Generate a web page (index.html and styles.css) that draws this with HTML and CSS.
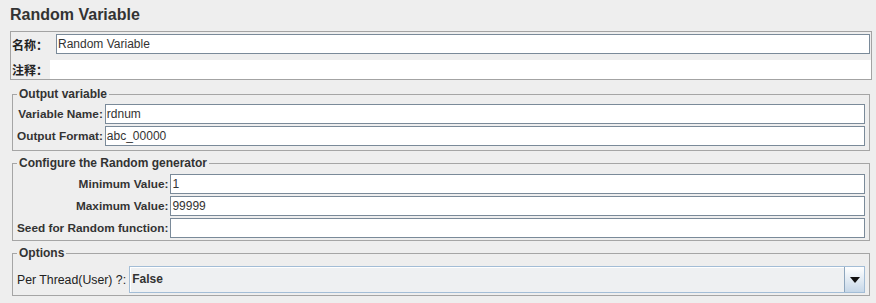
FILE: index.html
```html
<!DOCTYPE html>
<html lang="en">
<head>
    <meta charset="UTF-8">
    <meta name="viewport" content="width=device-width, initial-scale=1.0">
    <title>Random Variable</title>
    <link rel="stylesheet" href="styles.css">
</head>
<body>
    <div class="panel">
        <h1 class="title">Random Variable</h1>

        <div class="name-box">
            <div class="name-row">
                <span class="cn-label">名称：</span>
                <div class="field name-field">Random Variable</div>
            </div>
            <div class="comment-row">
                <span class="cn-label">注释：</span>
                <div class="comment-area"></div>
            </div>
        </div>

        <fieldset class="group group-output">
            <legend>Output variable</legend>
            <div class="form-grid">
                <label>Variable Name:</label>
                <div class="field">rdnum</div>
                <label>Output Format:</label>
                <div class="field">abc_00000</div>
            </div>
        </fieldset>

        <fieldset class="group group-random">
            <legend>Configure the Random generator</legend>
            <div class="form-grid">
                <label>Minimum Value:</label>
                <div class="field">1</div>
                <label>Maximum Value:</label>
                <div class="field">99999</div>
                <label>Seed for Random function:</label>
                <div class="field"></div>
            </div>
        </fieldset>

        <fieldset class="group group-options">
            <legend>Options</legend>
            <div class="option-row">
                <span class="plain-label">Per Thread(User) ?:</span>
                <div class="combo">
                    <span class="combo-value">False</span>
                    <div class="combo-arrow">
                        <svg width="10" height="6" viewBox="0 0 10 6"><path d="M0 0h10L5 6z" fill="#111"/></svg>
                    </div>
                </div>
            </div>
        </fieldset>
    </div>
</body>
</html>
```

FILE: styles.css
```css
body {
    margin: 0;
    padding: 0;
    background-color: #eeeeee;
    font-family: "Liberation Sans", Arial, sans-serif;
    font-size: 12px;
    color: #333333;
}
.panel {
    padding: 5px 4px 0 10px;
}
.title {
    margin: 0;
    font-size: 16px;
    line-height: 20px;
    font-weight: bold;
    color: #333333;
}
.name-box {
    margin-top: 6px;
    border: 1px solid #a3a3a3;
    padding: 2px 0 0 1px;
}
.name-row {
    display: flex;
    align-items: center;
    padding-right: 1px;
}
.comment-row {
    display: flex;
    align-items: center;
    margin-top: 6px;
}
.cn-label {
    font-family: "Liberation Sans", "Noto Sans CJK SC", sans-serif;
    font-weight: bold;
    font-size: 12px;
    color: #222222;
    flex: none;
}
.name-row .cn-label {
    width: 44px;
}
.comment-row .cn-label {
    width: 38px;
}
.comment-area {
    flex: 1;
    height: 19px;
    background-color: #fff;
}
.field {
    box-sizing: border-box;
    height: 20px;
    border: 1px solid #7a8a99;
    background-color: #fff;
    padding: 0 1px;
    line-height: 18px;
    font-size: 12px;
    color: #333333;
    white-space: nowrap;
}
.name-field {
    flex: 1;
}
.group {
    margin: 5px 2px 0;
    padding: 4px 4px 2px;
    border: 1px solid #a5a5a5;
    min-width: 0;
}
.group legend {
    padding: 0 2px;
    font-weight: bold;
    font-size: 12px;
    line-height: 14px;
    color: #333333;
}
.group-output {
    margin-top: 7px;
    padding-top: 3px;
    padding-bottom: 4px;
}
.group-options {
    padding-top: 6px;
    padding-bottom: 2px;
}
.form-grid {
    display: grid;
    grid-template-columns: auto 1fr;
    column-gap: 2px;
    row-gap: 2px;
}
.form-grid label {
    align-self: center;
    text-align: right;
    font-weight: bold;
    font-size: 11.8px;
    white-space: nowrap;
}
.option-row {
    display: flex;
    align-items: center;
    gap: 3px;
}
.plain-label {
    font-size: 12.3px;
    color: #222222;
    white-space: nowrap;
}
.combo {
    flex: 1;
    display: flex;
    box-sizing: border-box;
    height: 27px;
    border: 1px solid #a3bdd6;
    box-shadow: inset 1px 1px 0 #ffffff;
    background-color: #eef0f2;
}
.combo-value {
    flex: 1;
    padding-left: 2px;
    line-height: 25px;
    font-weight: bold;
}
.combo-arrow {
    width: 19px;
    display: flex;
    align-items: center;
    justify-content: center;
    border-left: 1px solid #8ea6bd;
    background: linear-gradient(#ffffff, #c6d7e8);
}
```
